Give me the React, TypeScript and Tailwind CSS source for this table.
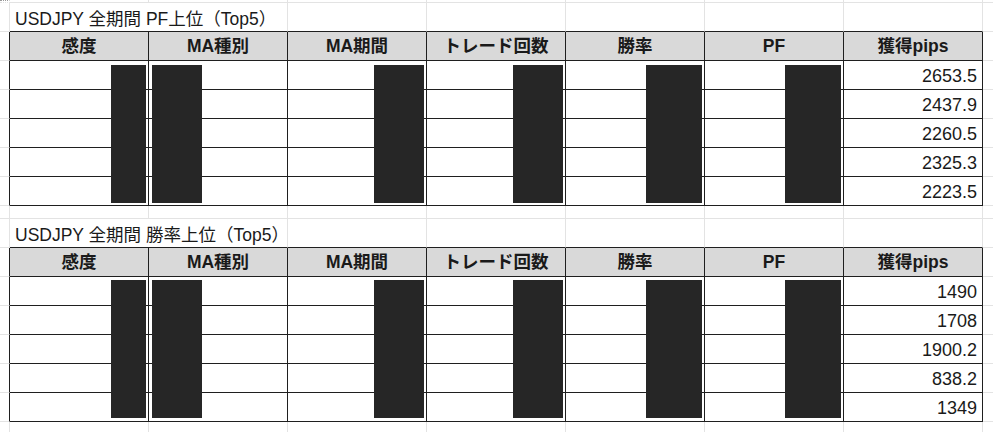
import React from "react";

const FONT = { fontFamily: '"Liberation Sans", "Noto Sans CJK JP", sans-serif' };

const headers = ["感度", "MA種別", "MA期間", "トレード回数", "勝率", "PF", "獲得pips"];
const pf = ["2653.5", "2437.9", "2260.5", "2325.3", "2223.5"];
const win = ["1490", "1708", "1900.2", "838.2", "1349"];

const boxes = [
  [111, 146],
  [152, 202],
  [374, 424],
  [513, 563],
  [646, 702],
  [785, 841],
];

function Gutter({ dark, first }: { dark?: boolean; first?: boolean }) {
  return (
    <div
      className={
        "w-[10px] shrink-0 border-b border-r border-b-[#e3e3e3] " +
        (dark ? "border-r-[#1f1f1f] " : "border-r-[#e3e3e3] ") +
        (first ? "border-t border-dotted border-t-[#9a9a9a]" : "")
      }
    />
  );
}

function Tail() {
  return <div className="flex-1 border-b border-[#e3e3e3]" />;
}

function BlankRow({ h, first, darkBottom }: { h: string; first?: boolean; darkBottom?: boolean }) {
  return (
    <div className={"flex " + h}>
      <Gutter first={first} />
      {headers.map((_, i) => (
        <div
          key={i}
          className={
            "w-[139px] shrink-0 border-b border-r border-r-[#e3e3e3] " +
            (darkBottom ? "border-b-[#1f1f1f]" : "border-b-[#e3e3e3]")
          }
        />
      ))}
      <Tail />
    </div>
  );
}

function TitleRow({ title }: { title: string }) {
  return (
    <div className="flex h-[29px]">
      <Gutter />
      <div className="w-[278px] shrink-0 flex items-center pl-[5px] pt-[5px] border-b border-r border-b-[#1f1f1f] border-r-[#e3e3e3] text-[17.5px] text-[#1a1a1a] whitespace-nowrap">
        {title}
      </div>
      {[0, 1, 2, 3, 4].map((i) => (
        <div key={i} className="w-[139px] shrink-0 border-b border-r border-b-[#1f1f1f] border-r-[#e3e3e3]" />
      ))}
      <Tail />
    </div>
  );
}

function HeaderRow() {
  return (
    <div className="flex h-[29px]">
      <Gutter dark />
      {headers.map((h, i) => (
        <div
          key={i}
          className="w-[139px] shrink-0 flex items-center justify-center bg-[#d9d9d9] border-b border-r border-[#1f1f1f] text-[17.5px] font-bold text-[#1a1a1a] whitespace-nowrap"
        >
          {h}
        </div>
      ))}
      <Tail />
    </div>
  );
}

function DataRow({ v }: { v: string }) {
  return (
    <div className="flex h-[29px]">
      <Gutter dark />
      {headers.map((_, i) => (
        <div
          key={i}
          className="w-[139px] shrink-0 flex items-center justify-end pr-[5px] pt-[2px] bg-white border-b border-r border-[#1f1f1f] text-[18px] text-[#1a1a1a]"
        >
          {i === 6 ? v : ""}
        </div>
      ))}
      <Tail />
    </div>
  );
}

function Redactions({ top }: { top: number }) {
  return (
    <>
      {boxes.map(([l, r], i) => (
        <div
          key={i}
          className="absolute bg-[#262626] h-[138px]"
          style={{ left: l, width: r - l, top }}
        />
      ))}
    </>
  );
}

export default function App() {
  return (
    <div className="relative w-[993px] h-[432px] overflow-hidden bg-white" style={FONT}>
      <BlankRow h="h-[3px]" first />
      <TitleRow title="USDJPY 全期間 PF上位（Top5）" />
      <HeaderRow />
      {pf.map((v, i) => (
        <DataRow key={i} v={v} />
      ))}
      <BlankRow h="h-[13px]" />
      <TitleRow title="USDJPY 全期間 勝率上位（Top5）" />
      <HeaderRow />
      {win.map((v, i) => (
        <DataRow key={i} v={v} />
      ))}
      <BlankRow h="h-[29px]" />
      <Redactions top={65} />
      <Redactions top={280} />
    </div>
  );
}
